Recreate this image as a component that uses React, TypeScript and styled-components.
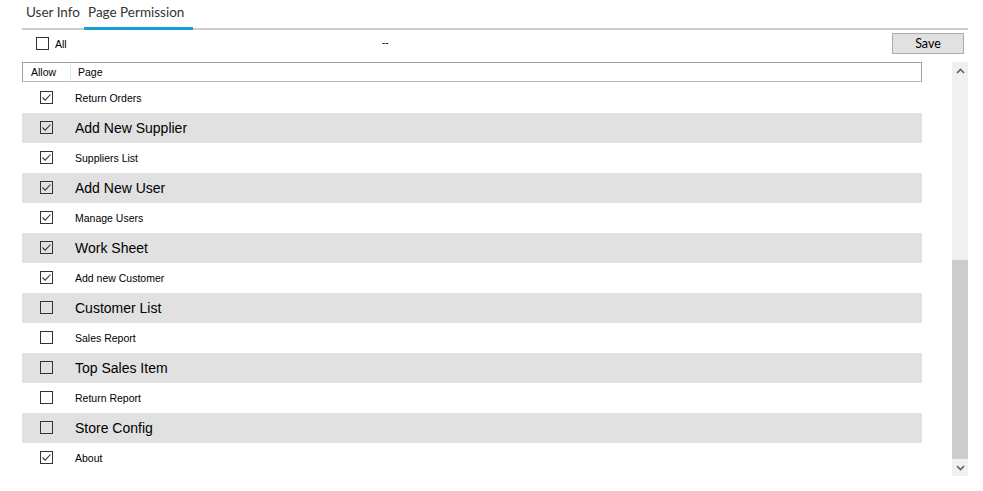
import styled, { createGlobalStyle } from 'styled-components';

const GlobalStyle = createGlobalStyle`
  html, body {
    margin: 0;
    padding: 0;
    background: #fff;
  }
  body {
    font-family: "Liberation Sans", Arial, sans-serif;
  }
`;

type Page = { name: string; allowed: boolean };

const pages: Page[] = [
  { name: 'Return Orders', allowed: true },
  { name: 'Add New Supplier', allowed: true },
  { name: 'Suppliers List', allowed: true },
  { name: 'Add New User', allowed: true },
  { name: 'Manage Users', allowed: true },
  { name: 'Work Sheet', allowed: true },
  { name: 'Add new Customer', allowed: true },
  { name: 'Customer List', allowed: false },
  { name: 'Sales Report', allowed: false },
  { name: 'Top Sales Item', allowed: false },
  { name: 'Return Report', allowed: false },
  { name: 'Store Config', allowed: false },
  { name: 'About', allowed: true },
];

const CheckBox = ({ checked }: { checked: boolean }) => (
  <Box>
    {checked && (
      <svg width="11" height="11" viewBox="0 0 11 11">
        <polyline points="1.5,5.5 4.2,8.2 9.5,2.5" fill="none" stroke="#333" strokeWidth="1.1" />
      </svg>
    )}
  </Box>
);

const Chevron = ({ up }: { up?: boolean }) => (
  <svg width="9" height="6" viewBox="0 0 9 6">
    <polyline
      points={up ? '1,5 4.5,1.5 8,5' : '1,1 4.5,4.5 8,1'}
      fill="none"
      stroke="#606060"
      strokeWidth="1.6"
    />
  </svg>
);

const App = () => {
  return (
    <>
      <GlobalStyle />
      <Screen>
        <TabStrip>
          <Tab $width={62}>User Info</Tab>
          <Tab $width={109} $active>
            Page Permission
          </Tab>
        </TabStrip>

        <Toolbar>
          <AllGroup>
            <CheckBox checked={false} />
            <SmallLabel>All</SmallLabel>
          </AllGroup>
          <Dash>--</Dash>
          <SaveButton>Save</SaveButton>
        </Toolbar>

        <GridArea>
          <Grid>
            <HeaderRow>
              <HeaderCell $width={49} $divider>
                Allow
              </HeaderCell>
              <HeaderCell>Page</HeaderCell>
            </HeaderRow>
            {pages.map((p, i) => (
              <Row key={p.name} $shaded={i % 2 === 1}>
                <CheckCell>
                  <CheckBox checked={p.allowed} />
                </CheckCell>
                <PageName $large={i % 2 === 1}>{p.name}</PageName>
              </Row>
            ))}
          </Grid>

          <ScrollBar>
            <ScrollButton>
              <Chevron up />
            </ScrollButton>
            <ScrollSpacer />
            <ScrollThumb />
            <ScrollButton>
              <Chevron />
            </ScrollButton>
          </ScrollBar>
        </GridArea>
      </Screen>
    </>
  );
};

const Screen = styled.div`
  width: 946px;
  margin-left: 22px;
  display: flex;
  flex-direction: column;
`;

const TabStrip = styled.div`
  display: flex;
  align-items: flex-end;
  height: 28px;
  border-bottom: 2px solid #cccccc;
`;

const Tab = styled.div<{ $width: number; $active?: boolean }>`
  width: ${(p) => p.$width}px;
  box-sizing: border-box;
  height: 30px;
  margin-bottom: -2px;
  padding: 4px 0 0 4px;
  font-family: Lato, "Open Sans", sans-serif;
  font-size: 13.5px;
  color: #333;
  white-space: nowrap;
  border-bottom: 3px solid ${(p) => (p.$active ? '#1a9fd4' : 'transparent')};
`;

const Toolbar = styled.div`
  display: flex;
  align-items: flex-start;
  height: 32px;
  padding-left: 14px;
`;

const AllGroup = styled.div`
  display: flex;
  align-items: center;
  gap: 6px;
  width: 346px;
  margin-top: 7px;
`;

const SmallLabel = styled.span`
  font-size: 10.5px;
  color: #000;
`;

const Dash = styled.span`
  margin-top: 7px;
  font-size: 10px;
  color: #000;
`;

const SaveButton = styled.button`
  margin: 3px 4px 0 auto;
  width: 72px;
  height: 21px;
  padding: 0;
  background: #e1e1e1;
  border: 1px solid #adadad;
  font-family: Lato, "Open Sans", sans-serif;
  font-size: 12.5px;
  color: #000;
`;

const GridArea = styled.div`
  display: flex;
  gap: 30px;
  height: 414px;
`;

const Grid = styled.div`
  width: 900px;
  display: flex;
  flex-direction: column;
`;

const HeaderRow = styled.div`
  display: flex;
  height: 20px;
  margin-bottom: 1px;
  box-sizing: border-box;
  border: 1px solid #a0a0a0;
  border-bottom-color: #b4b4b4;
`;

const HeaderCell = styled.div<{ $width?: number; $divider?: boolean }>`
  ${(p) => (p.$width ? `width: ${p.$width - 1}px;` : 'flex: 1;')}
  box-sizing: border-box;
  display: flex;
  align-items: center;
  padding-left: ${(p) => (p.$divider ? 8 : 7)}px;
  font-size: 10.5px;
  color: #000;
  border-right: ${(p) => (p.$divider ? '1px solid #e5e5e5' : 'none')};
`;

const Row = styled.div<{ $shaded: boolean }>`
  display: flex;
  align-items: center;
  height: 30px;
  background: ${(p) => (p.$shaded ? '#e1e1e1' : 'transparent')};
`;

const CheckCell = styled.div`
  width: 53px;
  padding-left: 18px;
  box-sizing: border-box;
  display: flex;
  align-items: center;
  margin-top: -1px;
`;

const Box = styled.span`
  width: 13px;
  height: 13px;
  box-sizing: border-box;
  border: 1px solid #333;
  background: transparent;
  display: inline-flex;
  align-items: center;
  justify-content: center;
`;

const PageName = styled.span<{ $large: boolean }>`
  font-size: ${(p) => (p.$large ? 14 : 10.5)}px;
  color: #000;
`;

const ScrollBar = styled.div`
  width: 16px;
  display: flex;
  flex-direction: column;
  background: #f0f0f0;
`;

const ScrollButton = styled.div`
  height: 17px;
  display: flex;
  align-items: center;
  justify-content: center;
`;

const ScrollSpacer = styled.div`
  flex: 1;
`;

const ScrollThumb = styled.div`
  height: 199px;
  background: #cdcdcd;
`;

export default App;
